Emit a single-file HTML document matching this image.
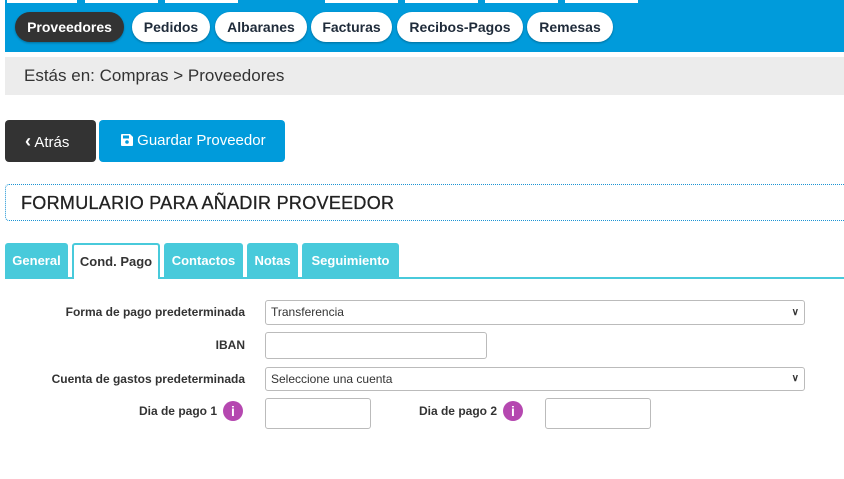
<!DOCTYPE html>
<html><head><meta charset="utf-8"><style>
*{box-sizing:border-box}
body{margin:0;width:844px;height:479px;background:#fff;font-family:"Liberation Sans",sans-serif;position:relative;overflow:hidden}
.a{position:absolute}
.nav{left:5px;top:0;width:839px;height:52px;background:#009bdb}
.tt{top:0;height:3px;background:#fff}
.pill{top:12px;height:30px;border-radius:15px;background:#fff;color:#1f2b3a;font-weight:bold;font-size:14px;line-height:30px;text-align:center;box-shadow:0 1px 2px rgba(0,0,0,.3)}
.bc{left:5px;top:57px;width:839px;height:38px;background:#ececec;color:#333;font-size:17px;line-height:38px;padding-left:19px}
.btn{top:120px;height:42px;border-radius:4px;color:#fff;font-size:15px;line-height:42px}
.title{left:5px;top:184px;width:845px;height:37px;border:1px dotted #1b94d4;border-right:none;border-radius:4px 0 0 4px;font-size:18px;line-height:36px;padding-left:15px;color:#222;letter-spacing:.3px;-webkit-text-stroke:.3px #222}
.tab{top:243px;height:36px;background:#48cadb;color:#fff;font-weight:bold;font-size:13px;line-height:36px;text-align:center;border-radius:3px 3px 0 0}
.lbl{font-size:12px;font-weight:bold;color:#333;text-align:right}
.inp{border:1px solid #bbb;border-radius:3px;background:#fff;font-size:12px;color:#333;padding-left:5px}
.i{width:20px;height:20px;border-radius:50%;background:#b548b0;color:#fff;font-weight:bold;font-size:14px;text-align:center;line-height:20px}
</style></head><body>
<div class="a nav"></div>
<div class="a tt" style="left:7px;width:70px"></div>
<div class="a tt" style="left:85px;width:73px"></div>
<div class="a tt" style="left:165px;width:73px"></div>
<div class="a tt" style="left:325px;width:73px"></div>
<div class="a tt" style="left:405px;width:73px"></div>
<div class="a tt" style="left:485px;width:73px"></div>
<div class="a tt" style="left:565px;width:73px"></div>
<div class="a pill" style="left:15px;width:109px;background:#333;color:#fff">Proveedores</div>
<div class="a pill" style="left:132px;width:78px">Pedidos</div>
<div class="a pill" style="left:215px;width:92px">Albaranes</div>
<div class="a pill" style="left:311px;width:81px">Facturas</div>
<div class="a pill" style="left:397px;width:126px">Recibos-Pagos</div>
<div class="a pill" style="left:527px;width:86px">Remesas</div>
<div class="a bc">Estás en: Compras &gt; Proveedores</div>
<div class="a btn" style="left:5px;width:91px;background:#333;padding-left:20px"><b style="font-size:18px">&#8249;</b> Atrás</div>
<div class="a btn" style="left:99px;width:186px;background:#009bdb;padding-left:22px"><svg width="12" height="12" viewBox="0 0 12 12" style="vertical-align:-1px"><path d="M0 1a1 1 0 011-1h8l3 3v8a1 1 0 01-1 1H1a1 1 0 01-1-1z" fill="#fff"/><rect x="2" y="1.5" width="6" height="3" fill="#009bdb"/><circle cx="6" cy="8" r="1.8" fill="#009bdb"/></svg> Guardar Proveedor</div>
<div class="a title">FORMULARIO PARA AÑADIR PROVEEDOR</div>
<div class="a" style="left:5px;top:277px;width:839px;height:2px;background:#48cadb"></div>
<div class="a tab" style="left:5px;width:63px">General</div>
<div class="a tab" style="left:72px;width:88px;background:#fff;color:#333;border:2px solid #48cadb;border-bottom:none;line-height:34px">Cond. Pago</div>
<div class="a tab" style="left:164px;width:79px">Contactos</div>
<div class="a tab" style="left:247px;width:51px">Notas</div>
<div class="a tab" style="left:302px;width:97px">Seguimiento</div>
<div class="a lbl" style="left:0;width:245px;top:305px">Forma de pago predeterminada</div>
<div class="a inp" style="left:265px;top:300px;width:540px;height:25px;line-height:23px">Transferencia<span style="position:absolute;right:5px;font-size:10px;font-weight:bold">&#8744;</span></div>
<div class="a lbl" style="left:0;width:245px;top:338px">IBAN</div>
<div class="a inp" style="left:265px;top:332px;width:222px;height:27px"></div>
<div class="a lbl" style="left:0;width:245px;top:372px">Cuenta de gastos predeterminada</div>
<div class="a inp" style="left:265px;top:367px;width:540px;height:24px;line-height:22px">Seleccione una cuenta<span style="position:absolute;right:5px;font-size:10px;font-weight:bold">&#8744;</span></div>
<div class="a lbl" style="left:0;width:217px;top:404px">Dia de pago 1</div>
<div class="a i" style="left:223px;top:401px">i</div>
<div class="a inp" style="left:265px;top:398px;width:106px;height:31px"></div>
<div class="a lbl" style="left:300px;width:197px;top:404px">Dia de pago 2</div>
<div class="a i" style="left:503px;top:401px">i</div>
<div class="a inp" style="left:545px;top:398px;width:106px;height:31px"></div>
</body></html>
